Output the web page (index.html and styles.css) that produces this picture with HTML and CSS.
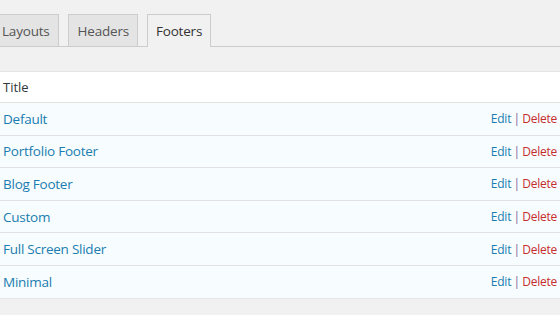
FILE: index.html
```html
<!DOCTYPE html>
<html>
<head>
<meta charset="utf-8">
<link rel="stylesheet" href="styles.css">
</head>
<body>
<div class="wrap">
  <nav class="tabs">
    <a class="tab">Layouts</a>
    <a class="tab">Headers</a>
    <a class="tab active">Footers</a>
  </nav>
  <table class="list">
    <thead>
      <tr><th colspan="2">Title</th></tr>
    </thead>
    <tbody>
      <tr><td><a class="name">Default</a></td><td class="actions"><a class="edit">Edit</a> <span class="sep">|</span> <a class="del">Delete</a></td></tr>
      <tr><td><a class="name">Portfolio Footer</a></td><td class="actions"><a class="edit">Edit</a> <span class="sep">|</span> <a class="del">Delete</a></td></tr>
      <tr><td><a class="name">Blog Footer</a></td><td class="actions"><a class="edit">Edit</a> <span class="sep">|</span> <a class="del">Delete</a></td></tr>
      <tr><td><a class="name">Custom</a></td><td class="actions"><a class="edit">Edit</a> <span class="sep">|</span> <a class="del">Delete</a></td></tr>
      <tr><td><a class="name">Full Screen Slider</a></td><td class="actions"><a class="edit">Edit</a> <span class="sep">|</span> <a class="del">Delete</a></td></tr>
      <tr><td><a class="name">Minimal</a></td><td class="actions"><a class="edit">Edit</a> <span class="sep">|</span> <a class="del">Delete</a></td></tr>
    </tbody>
  </table>
</div>
</body>
</html>
```
FILE: styles.css
```css
html, body {
  margin: 0;
  padding: 0;
  background: #f1f1f1;
  font-family: "Open Sans", "Liberation Sans", sans-serif;
  font-size: 13px;
  color: #32373c;
  overflow: hidden;
}
.wrap {
  margin: 0 -8px 0 -8px;
  padding-top: 14px;
}
.tabs {
  display: flex;
  align-items: flex-end;
  border-bottom: 1px solid #ccc;
  padding-left: 0;
}
.tab {
  display: block;
  padding: 5px 8px 3px;
  line-height: 23px;
  font-size: 13.5px;
  letter-spacing: -0.2px;
  font-weight: 400;
  color: #555;
  background: #e4e4e4;
  border: 1px solid #ccc;
  border-bottom: none;
  margin-left: 9px;
}
.tab:first-child {
  margin-left: 0;
  padding-left: 9px;
}
.tab:nth-child(2) {
  padding-left: 9px;
}
.tab.active {
  background: #f1f1f1;
  color: #333;
  margin-bottom: -1px;
  padding-bottom: 4px;
}
.list {
  width: 100%;
  border-collapse: collapse;
  margin-top: 24px;
  background: #fff;
  border: 1px solid #e5e5e5;
  box-shadow: 0 1px 1px rgba(0,0,0,.04);
}
.list th {
  text-align: left;
  font-weight: 400;
  padding: 0 10px;
  height: 30px;
  color: #32373c;
  border-bottom: 1px solid #e1e1e1;
}
.list td {
  height: 31.6px;
  padding: 0 10px;
  background: #f7fcfe;
  border-bottom: 1px solid #e1e1e1;
}
.list tbody tr:last-child td {
  border-bottom: none;
}
.name {
  color: #1a7db0;
  font-weight: 500;
  font-size: 13.5px;
  letter-spacing: -0.25px;
}
.actions {
  text-align: right;
  white-space: nowrap;
  font-size: 12px;
  letter-spacing: -0.25px;
  word-spacing: -0.5px;
}
.edit {
  color: #1a7db0;
}
.sep {
  color: #7b5f9c;
}
.del {
  color: #c62d2d;
}
```
